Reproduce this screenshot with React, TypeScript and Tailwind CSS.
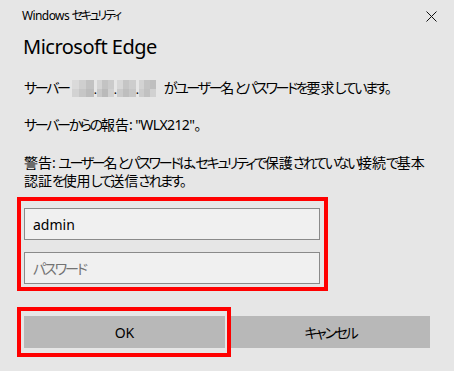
import React from "react";

const font =
  "font-['Noto_Sans','Noto_Sans_CJK_JP',sans-serif] [font-feature-settings:'palt']";

// kana in the Windows UI font are much narrower than kanji, so tighten them run by run
function JP({ text }: { text: string }) {
  const runs = text.match(/[\u4e00-\u9fff]+|[\u3000-\u30ff]+|[^\u3000-\u30ff\u4e00-\u9fff]+/g) || [];
  return (
    <>
      {runs.map((r, i) => {
        const cls = /[\u4e00-\u9fff]/.test(r)
          ? ""
          : /[\u3000-\u30ff]/.test(r)
          ? "tracking-[-2.3px]"
          : "tracking-[-0.6px]";
        return (
          <span key={i} className={cls}>
            {r}
          </span>
        );
      })}
    </>
  );
}

const tiles = [
  ["#dadada", "#cfcfcf", "#c2c2c2", "#d2d2d2", "#c6c6c6", "#bcbcbc"],
  ["#d4d4d4", "#c3c3c3", "#cbcbcb", "#c8c8c8", "#bababa", "#d0d0d0"],
  ["#d7d7d7", "#c5c5c5", "#cdcdcd", "#cacaca", "#bebebe", "#c7c7c7"],
  ["#d3d3d3", "#c4c4c4", "#bfbfbf", "#cccccc", "#c1c1c1", "#d1d1d1"],
];
const widths = ["w-[22px]", "w-[17px]", "w-[19px]", "w-[17px]"];

function MaskedAddress() {
  return (
    <span className="inline-flex items-end h-[17px] ml-[3px] mr-[8px] align-top mt-[1px]">
      {tiles.map((t, i) => (
        <React.Fragment key={i}>
          <span className={`grid grid-cols-3 grid-rows-2 h-[17px] ${widths[i]}`}>
            {t.map((c, j) => (
              <span key={j} style={{ backgroundColor: c }} />
            ))}
          </span>
          {i < 3 && <span className="w-[3px] h-[17px] text-[12px] leading-[19px]">.</span>}
        </React.Fragment>
      ))}
    </span>
  );
}

export default function App() {
  return (
    <div className={`w-[454px] h-[371px] bg-[#e6e6e6] text-[#000] overflow-hidden ${font}`}>
      <div className="h-[32px] flex items-center justify-between pl-[22px] pr-[17px]">
        <span className="text-[12px]">
          <JP text="Windows セキュリティ" />
        </span>
        <svg width="11" height="11" viewBox="0 0 11 11">
          <path d="M0.5 0.5 L10.5 10.5 M10.5 0.5 L0.5 10.5" stroke="#111" strokeWidth="1" />
        </svg>
      </div>

      <div className="px-6">
        <h1 className="mt-[1px] ml-[-1px] text-[20px] leading-[28px] font-normal tracking-[-0.5px]">
          Microsoft Edge
        </h1>

        <p className="mt-[18px] h-[18px] text-[14px] leading-[18px] whitespace-nowrap">
          <JP text="サーバー" />
          <MaskedAddress />
          <JP text="がユーザー名とパスワードを要求しています。" />
        </p>
        <p className="mt-[19px] h-[18px] text-[14px] leading-[18px] whitespace-nowrap">
          <JP text={'サーバーからの報告: "WLX212"。'} />
        </p>
        <p className="mt-[20px] h-[36px] text-[14px] leading-[18px] whitespace-nowrap">
          <JP text="警告: ユーザー名とパスワードは、セキュリティで保護されていない接続で基本" />
          <br />
          <JP text="認証を使用して送信されます。" />
        </p>

        <div className="mt-[7px] ml-[-7px] w-[311px] border-4 border-[#ff0000] pt-[7px] pb-[3px] pl-[3px] pr-[4px] flex flex-col gap-[12px]">
          <input
            defaultValue="admin"
            className="w-[296px] h-[32px] bg-[#f0f0f0] border border-[#8a8a8a] px-[8px] text-[14px] outline-none"
          />
          <input
            type="password"
            placeholder="パスワード"
            className="w-[296px] h-[32px] bg-[#f0f0f0] border border-[#8a8a8a] px-[8px] text-[14px] outline-none placeholder:text-[#737373] placeholder:tracking-[-2px]"
          />
        </div>

        <div className="mt-[16px] flex items-start">
          <div className="ml-[-7px] w-[214px] border-4 border-[#ff0000] pt-[5px] pb-[5px] pl-[3px] pr-[2px]">
            <button className="w-[201px] h-[32px] bg-[#b8b8b8] text-[14px]">OK</button>
          </div>
          <button className="mt-[9px] w-[199px] h-[32px] bg-[#b8b8b8] text-[14px]">
            <JP text="キャンセル" />
          </button>
        </div>
      </div>
    </div>
  );
}
